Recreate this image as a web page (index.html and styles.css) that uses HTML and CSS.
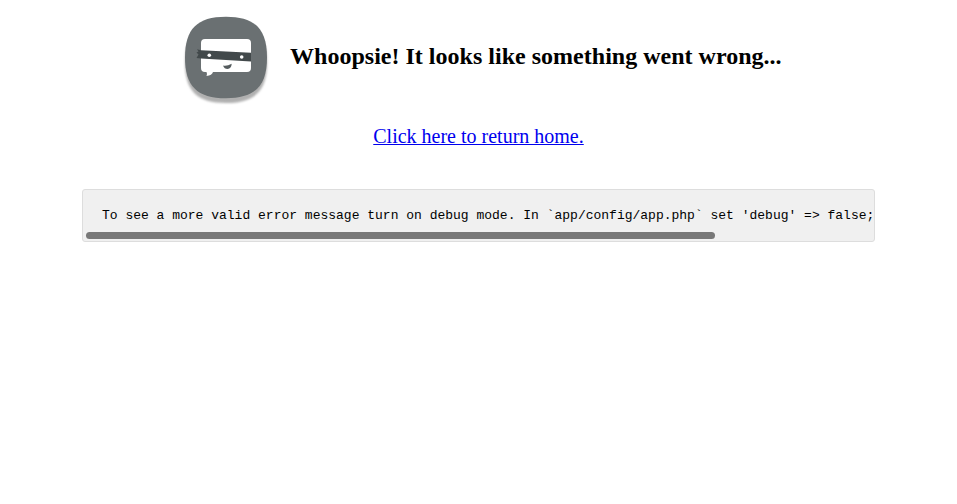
FILE: index.html
```
<!DOCTYPE html>
<html lang="en">
<head>
<meta charset="utf-8">
<title>Whoopsie!</title>
<link rel="stylesheet" href="styles.css">
</head>
<body>
<main class="page">
  <header class="header">
    <svg class="logo" viewBox="0 0 100 104" width="100" height="104" aria-hidden="true">
      <defs><filter id="soft" x="-10%" y="-10%" width="120%" height="120%"><feGaussianBlur stdDeviation="0.8"/></filter></defs>
      <path d="M50 14C79 14 91 26 91 54.500S79 95 50 95S9 83 9 54.500S21 14 50 14Z" fill="#b0b0b0" filter="url(#soft)"/>
      <path d="M50 8.700C79 8.700 91 21 91 49.500S79 90.300 50 90.300S9 78 9 49.500S21 8.700 50 8.700Z" fill="#6a7072"/>
      <path d="M29 31H71Q75 31 75 35V60Q75 64 71 64H37Q36 67.500 30.500 68Q31.500 66 30.500 64H29Q25 64 25 60V35Q25 31 29 31Z" fill="#fff"/>
      <path d="M21 41.300L25 42.300L75 44.700V53.400L25 50.500L20.500 50L22.500 46.500L20.500 44.500L22.500 43.500Z" fill="#42494b"/>
      <circle cx="33.300" cy="47.300" r="1.800" fill="#fff"/>
      <circle cx="65.700" cy="49" r="1.800" fill="#fff"/>
      <path d="M47 57.500Q51 58.300 55.700 55.800Q55.400 60.800 51.500 61Q48.300 61 47 57.500Z" fill="#555c5e"/>
    </svg>
    <h1 class="title">Whoopsie! It looks like something went wrong...</h1>
  </header>
  <p class="return"><a class="home" href="#">Click here to return home.</a></p>
  <section class="message">
    <pre class="code">To see a more valid error message turn on debug mode. In `app/config/app.php` set 'debug' =&gt; false;</pre>
    <div class="track"><div class="thumb"></div></div>
  </section>
</main>
</body>
</html>
```
FILE: styles.css
```
body {
  margin: 0;
  background: #fff;
  color: #000;
  font-family: "Liberation Serif", serif;
}
.page {
  width: 793px;
  margin: 0 auto;
  padding-top: 8px;
}
.header {
  display: flex;
  padding-left: 94px;
}
.logo {
  flex: none;
}
.title {
  margin: 34px 0 0 14px;
  font-size: 24px;
  line-height: 28px;
  letter-spacing: 0.015px;
  white-space: nowrap;
}
.return {
  margin: 13px 0 0;
  text-align: center;
  font-size: 20px;
  line-height: 23px;
}
.home {
  color: #00e;
  text-decoration-thickness: 1px;
  text-decoration-skip-ink: none;
}
.message {
  box-sizing: border-box;
  height: 53px;
  margin-top: 41px;
  padding: 18px 0 0;
  border: 1px solid #ddd;
  border-radius: 3px;
  background: #f0f0f0;
  overflow: hidden;
}
.code {
  margin: 0 0 0 19px;
  font: 13px/16px "Liberation Mono", monospace;
}
.track {
  margin: 8px 3px 0;
}
.thumb {
  width: 629px;
  height: 7px;
  border-radius: 4px;
  background: #787878;
}
```
